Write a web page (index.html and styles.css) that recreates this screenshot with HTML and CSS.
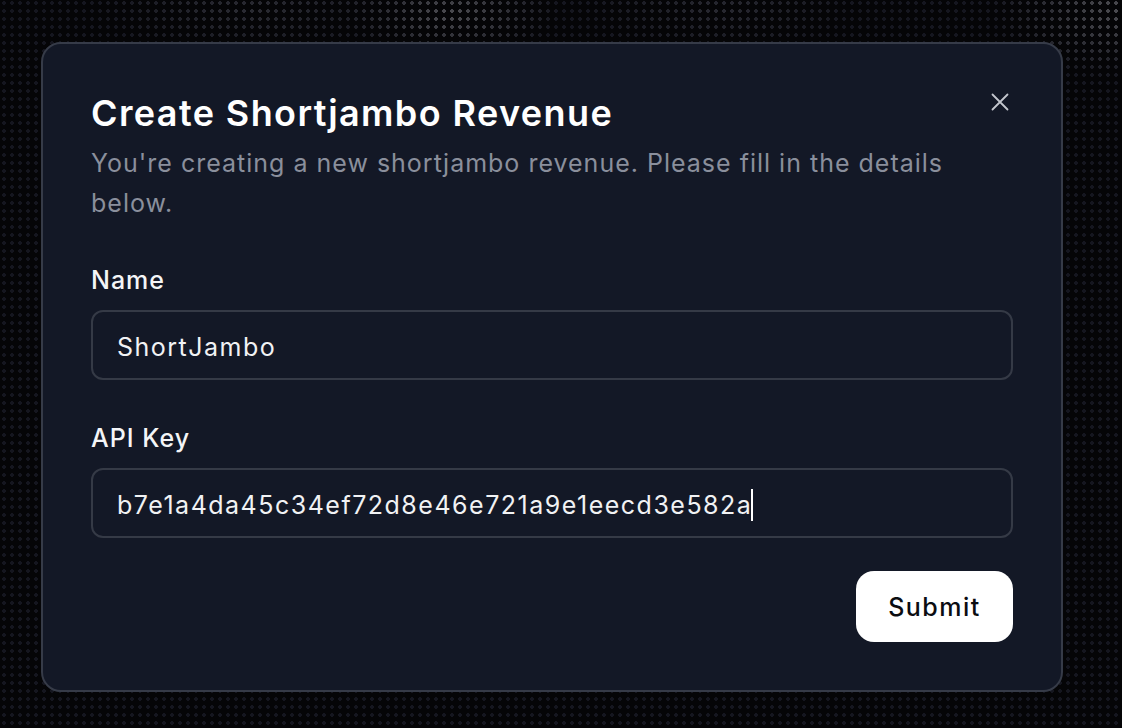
FILE: index.html
```html
<!DOCTYPE html>
<html lang="en">
<head>
<meta charset="utf-8">
<title>Create Shortjambo Revenue</title>
<link rel="stylesheet" href="styles.css">
</head>
<body>
<div class="glow"></div>
<div class="dialog">
  <button class="close" aria-label="Close">
    <svg width="24" height="24" viewBox="0 0 24 24" fill="none" stroke="currentColor" stroke-width="1.8" stroke-linecap="round"><path d="M4.5 4.5L19.5 19.5M19.5 4.5L4.5 19.5"/></svg>
  </button>
  <h1 class="title">Create Shortjambo Revenue</h1>
  <p class="desc">You're creating a new shortjambo revenue. Please fill in the details below.</p>
  <div class="field field-first">
    <label class="label">Name</label>
    <div class="input">ShortJambo</div>
  </div>
  <div class="field">
    <label class="label">API Key</label>
    <div class="input">b7e1a4da45c34ef72d8e46e721a9e1eecd3e582a<span class="caret"></span></div>
  </div>
  <div class="actions">
    <button class="submit">Submit</button>
  </div>
</div>
</body>
</html>
```

FILE: styles.css
```css
* { box-sizing: border-box; }
html, body { margin: 0; height: 100%; }
body {
  background-color: #050507;
  background-image: radial-gradient(circle at 4px 4px, #15161f 1.6px, transparent 2px);
  background-size: 8px 8px;
  background-position: 0 -1px;
  font-family: Inter, "Noto Sans", sans-serif;
  padding: 42px 59px 36px 41px;
  display: flex;
  flex-direction: column;
  position: relative;
}
.glow {
  position: absolute;
  inset: 0;
  background-image: radial-gradient(circle at 4px 4px, #4c4c51 1.6px, transparent 2px);
  background-size: 8px 8px;
  background-position: 0 -1px;
  -webkit-mask-image:
    radial-gradient(ellipse 110px 45px at 450px 14px, rgba(0,0,0,1), transparent),
    radial-gradient(ellipse 130px 70px at 1120px 10px, rgba(0,0,0,1), transparent),
    radial-gradient(ellipse 160px 45px at 250px 10px, rgba(0,0,0,0.4), transparent),
    radial-gradient(ellipse 140px 45px at 720px 10px, rgba(0,0,0,0.35), transparent);
  mask-image:
    radial-gradient(ellipse 110px 45px at 450px 14px, rgba(0,0,0,1), transparent),
    radial-gradient(ellipse 130px 70px at 1120px 10px, rgba(0,0,0,1), transparent),
    radial-gradient(ellipse 160px 45px at 250px 10px, rgba(0,0,0,0.4), transparent),
    radial-gradient(ellipse 140px 45px at 720px 10px, rgba(0,0,0,0.35), transparent);
  pointer-events: none;
}
.dialog {
  position: relative;
  width: 1022px;
  height: 650px;
  background: #131826;
  border: 2px solid #363b48;
  border-radius: 20px;
  padding: 49px 48px 48px 48px;
  display: flex;
  flex-direction: column;
}
.close {
  position: absolute;
  top: 46px;
  right: 49px;
  width: 24px;
  height: 24px;
  padding: 0;
  background: none;
  border: 0;
  color: #c3c6cd;
  display: flex;
}
.title {
  margin: 0;
  font-size: 36px;
  line-height: 40px;
  font-weight: 600;
  color: #ffffff;
  letter-spacing: 1.4px;
}
.desc {
  margin: 10px 0 0 0;
  font-size: 25px;
  line-height: 40px;
  color: #8a8f9c;
  font-weight: 400;
  letter-spacing: 1px;
  max-width: 900px;
}
.field {
  display: flex;
  flex-direction: column;
  gap: 18px;
  margin-top: 46px;
}
.field-first { margin-top: 45px; }
.label {
  font-size: 25px;
  line-height: 24px;
  font-weight: 500;
  color: #f4f5f7;
  letter-spacing: 1px;
}
.input {
  height: 70px;
  border: 2px solid #353a46;
  border-radius: 12px;
  padding: 3px 24px 0 24px;
  display: flex;
  align-items: center;
  font-size: 25px;
  color: #f1f2f4;
  font-weight: 400;
  letter-spacing: 1.5px;
}
.caret {
  display: inline-block;
  width: 2px;
  height: 32px;
  background: #ffffff;
  margin-left: -1px;
}
.actions {
  display: flex;
  justify-content: flex-end;
  margin-top: 33px;
}
.submit {
  width: 157px;
  height: 71px;
  border: 0;
  border-radius: 18px;
  background: #ffffff;
  color: #0b0d12;
  font-family: Inter, "Noto Sans", sans-serif;
  font-size: 25px;
  font-weight: 500;
  letter-spacing: 1.5px;
}
```
